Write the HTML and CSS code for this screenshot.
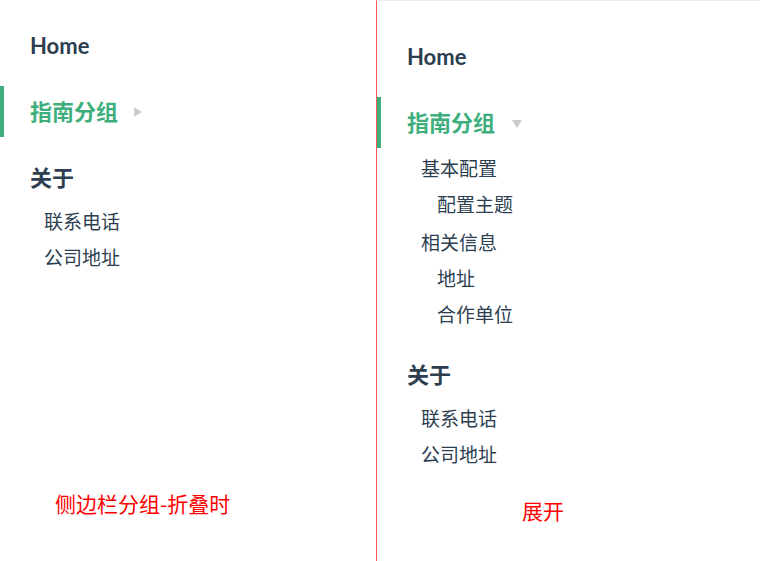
FILE: index.html
```html
<!DOCTYPE html>
<html lang="zh-CN">
<head>
<meta charset="utf-8">
<title>侧边栏分组</title>
<link rel="stylesheet" href="styles.css">
</head>
<body>
<div class="page">
  <section class="panel panel-collapsed">
    <nav class="sidebar">
      <div class="heading">Home</div>
      <div class="group">
        <div class="heading active">指南分组<span class="arrow arrow-right"></span></div>
      </div>
      <div class="group">
        <div class="heading">关于</div>
        <ul class="links">
          <li class="link">联系电话</li>
          <li class="link">公司地址</li>
        </ul>
      </div>
    </nav>
    <p class="caption">侧边栏分组-折叠时</p>
  </section>
  <section class="panel panel-expanded">
    <nav class="sidebar">
      <div class="heading">Home</div>
      <div class="group">
        <div class="heading active">指南分组<span class="arrow arrow-down"></span></div>
        <ul class="links children">
          <li class="link">基本配置</li>
          <li class="link nested">配置主题</li>
          <li class="link sub-start">相关信息</li>
          <li class="link nested">地址</li>
          <li class="link nested">合作单位</li>
        </ul>
      </div>
      <div class="group">
        <div class="heading">关于</div>
        <ul class="links">
          <li class="link">联系电话</li>
          <li class="link">公司地址</li>
        </ul>
      </div>
    </nav>
    <p class="caption">展开</p>
  </section>
</div>
</body>
</html>
```

FILE: styles.css
```css
* {
  box-sizing: border-box;
}

html, body {
  margin: 0;
  padding: 0;
  background: #fff;
}

body {
  font-family: "Lato", "Noto Sans CJK SC", sans-serif;
  color: #2c3e50;
}

.page {
  display: flex;
  width: 760px;
  height: 561px;
  overflow: hidden;
}

.panel {
  display: flex;
  flex-direction: column;
}

.panel-collapsed {
  width: 376px;
  flex: none;
}

.panel-expanded {
  flex: 1;
  border-left: 1px solid #f55;
  border-top: 1px solid #eaecef;
}

.sidebar {
  display: flex;
  flex-direction: column;
}

.panel-collapsed .sidebar {
  height: 488px;
  padding-top: 20px;
}

.panel-expanded .sidebar {
  height: 494px;
  padding-top: 30px;
}

.group {
  margin-top: 15px;
}

.panel-expanded .group + .group {
  margin-top: 16px;
}

.heading {
  display: flex;
  align-items: center;
  font-size: 22px;
  font-weight: 700;
  line-height: 31px;
  padding: 10px 0 10px 26px;
  border-left: 4px solid transparent;
  color: #2c3e50;
}

.heading.active {
  color: #3eaf7c;
  border-left-color: #3eaf7c;
}

.arrow {
  display: inline-block;
  width: 0;
  height: 0;
  margin-left: 16px;
}

.arrow-right {
  border-top: 5px solid transparent;
  border-bottom: 5px solid transparent;
  border-left: 8px solid #ccc;
}

.arrow-down {
  margin-left: 17px;
  margin-top: 2px;
  border-left: 5px solid transparent;
  border-right: 5px solid transparent;
  border-top: 8px solid #ccc;
}

.links {
  list-style: none;
  margin: 0;
  padding: 1px 0 0;
}

.links.children {
  padding-top: 3px;
}

.link {
  font-size: 19px;
  line-height: 36px;
  padding-left: 44px;
  color: #2c3e50;
}

.link.nested {
  padding-left: 60px;
}

.link.sub-start {
  margin-top: 2px;
}

.caption {
  margin: 0;
  font-family: "Noto Sans CJK SC", sans-serif;
  font-size: 21px;
  line-height: 30px;
  color: #f00;
}

.panel-collapsed .caption {
  padding-left: 55px;
}

.panel-expanded .caption {
  padding-left: 145px;
}
```
